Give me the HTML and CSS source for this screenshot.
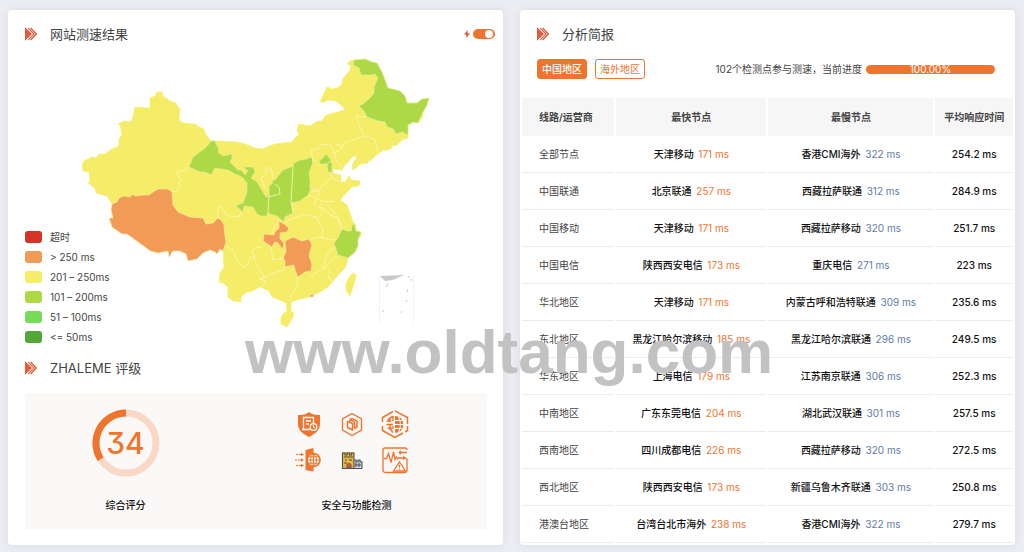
FILE: index.html
```html
<!DOCTYPE html>
<html lang="zh-CN">
<head>
<meta charset="utf-8">
<title>网站测速结果</title>
<link rel="stylesheet" href="styles.css">
</head>
<body>
<svg class="defs" aria-hidden="true">
  <symbol id="chevrons" viewBox="0 0 12 14"><path d="M0 0.200 L7.200 7 L0 13.800Z" fill="#dd5d3c"/><path d="M3.200 1.200 L8.800 7 L3.200 12.800 M5.600 1 L11.300 7 L5.600 13" fill="none" stroke="#dd5d3c" stroke-width="1.300"/><path d="M2.200 1.200 L7.800 7 L2.200 12.800" fill="none" stroke="#fff" stroke-width=".7"/></symbol>
</svg>
<main class="page">
  <section class="card result">
    <header class="title-row">
      <h2 class="title"><svg class="chevrons"><use href="#chevrons"/></svg>网站测速结果</h2>
      <label class="switch">
        <svg class="bolt" viewBox="0 0 6 8"><path d="M3.6 0 L0 4.6 H2.3 L1.9 8 L6 3.3 H3.5Z" fill="#e0552f"/></svg>
        <input class="switch-input" type="checkbox" checked aria-label="快速模式">
      </label>
    </header>
    <div class="map-area">
      <svg class="map" viewBox="75 55 360 292" role="img" aria-label="中国地图">
        <g fill="#f5ed68" stroke="#f5ed68" stroke-width=".6" stroke-linejoin="round">
          <path d="M157 92 162 92 163 96 170 101 176 103 177 106 180 109 179 120 183 123 195 124 199 127 204 129 206 135 211 141 217 141 237 142 245 144 255 148 262 149 275 144 292 142 295 138 299 135 297 130 299 124 310 126 318 121 322 121 325 116 330 114 345 110 343 107 336 101 327 100 325 102 320 102 327 87 332 89 337 88 342 84 342 80 350 70 351 66 347 64 350 61 354 60 365 59 372 62 377 63 379 68 382 72 384 80 388 88 400 91 405 96 407 103 417 103 422 99 429 98 427 105 423 112 422 118 418 123 413 122 408 125 408 138 402 140 397 145 392 146 391 149 387 150 383 150 378 154 367 163 360 164 356 168 352 170 353 163 357 157 353 156 348 162 345 165 342 170 333 169 333 173 341 175 341 182 345 182 349 176 351 180 360 181 359 186 352 187 345 194 340 200 347 205 350 213 353 222 356 225 356 231 361 232 361 235 358 240 355 252 348 258 347 263 345 268 340 273 328 287 320 292 312 296 297 300 291 302 291 311 287 311 286 303 280 300 272 297 269 291 260 287 250 292 247 292 241 297 241 302 233 301 228 297 228 287 223 283 219 282 220 273 224 267 223 251 190 225 112 204 107 196 96 193 95 188 88 183 90 181 89 172 83 171 82 165 84 161 92 157 96 158 99 154 105 154 110 150 119 146 119 139 122 135 120 125 118 124 124 121 131 122 133 117 135 107 150 108 150 98 155 96Z"/>
          <path d="M285 312 290 311 294 313 292 319 287 327 281 324 281 317Z"/>
          <path d="M353 273 356 275 355 281 350 296 346 290 346 284 349 277Z"/>
        </g>
        <g stroke="#fbe9a0" stroke-width=".7" stroke-linejoin="round" fill="#f29b56">
          <path d="M112 204 117 202 119 198 124 196 130 197 133 194 135 196 143 195 149 195 153 192 158 189 168 189 172 192 173 205 178 212 190 217 203 218 206 224 213 223 218 218 222 221 224 225 225 236 226 242 223 251 220 249 217 254 215 252 210 250 203 253 197 259 188 261 186 254 180 251 173 251 169 257 168 251 158 253 150 251 145 247 138 242 127 234 122 234 112 227 109 218 113 218 111 210Z"/>
          <path d="M279 221 284 224 289 228 287 232 280 233 280 239 284 243 283 250 278 243 275 242 272 247 263 241 264 234 274 235 275 232 279 228Z"/>
          <path d="M285 241 293 237 302 241 309 239 312 245 309 255 312 265 311 271 305 272 298 277 295 270 294 265 285 267 285 261 283 258 286 252Z"/>
          <path d="M310 295 314 294 313 297 310 297Z"/>
        </g>
        <g stroke="#e0ed9e" stroke-width=".7" stroke-linejoin="round" fill="#add947">
          <path d="M354 60 365 59 372 62 377 63 382 72 388 88 400 91 405 96 407 103 417 103 422 99 429 98 427 105 423 112 418 123 413 122 408 125 408 135 402 132 396 134 393 129 387 127 385 122 378 121 367 117 364 111 359 106 363 104 370 98 374 93 374 87 378 78 375 74 372 75 361 75 359 68 353 65Z"/>
          <path d="M211 141 215 141 217 146 219 150 218 152 223 156 232 154 232 158 230 162 234 166 238 170 241 170 245 175 248 171 243 167 253 167 255 172 251 178 257 182 262 190 266 197 269 195 269 186 273 183 272 181 275 180 283 170 293 166 294 163 300 160 306 159 312 157 313 162 309 173 311 188 308 195 300 201 291 203 293 213 285 217 284 222 277 216 267 213 267 216 261 216 257 214 253 207 244 206 243 212 237 207 237 205 243 203 247 192 247 183 242 177 235 174 228 170 221 169 215 168 211 175 205 172 200 172 189 167 193 157 201 151 204 149 208 145Z"/>
          <path d="M319 161 323 158 326 154 331 160 330 163 326 164 320 164Z"/>
          <path d="M329 161 332 163 332 172 328 172 327 166Z"/>
          <path d="M342 229 347 231 351 231 352 226 354 223 356 231 361 232 358 240 358 246 355 252 348 258 338 255 334 243 338 238Z"/>
        </g>
        <g fill="none" stroke="#fcf6b8" stroke-width=".8" stroke-linejoin="round">
          <path d="M189 167 185 170 176 172 181 180 178 183 181 187 175 192 172 191M218 218 218 207 221 206 225 213 229 216 238 217 242 213M226 245 230 249 233 250 238 262 243 267 248 264 250 258 255 257 252 251 255 248 263 247M253 257 257 264 264 277 260 279 266 281 262 287M258 280 271 274 283 270 285 267M298 277 297 287 291 296 290 301M284 222 295 218 303 214 318 218M314 214 317 219 323 228 322 237 311 239M293 212 292 203M308 195 320 200 325 202 335 201M317 190 310 188 310 183M313 162 311 150 318 149 322 144 331 145 334 153 342 149 344 143 364 136 359 124 356 116 366 117M366 136 375 140 378 154M342 149 340 145 335 144M266 175 266 168 271 168 273 179M266 175 261 178 265 188M268 197 280 194 279 187 275 184M268 213 269 195M291 203 292 185 293 166M320 191 314 204 323 209 320 217M320 204 329 214 337 218 342 229M327 205 336 214 342 226M331 178 323 185 317 192M321 238 335 240M334 248 327 254 323 269 310 276M329 269 329 278 334 285M338 256 330 261 325 269M271 247 273 260 284 258M279 221 275 225 272 234M311 192 320 190M331 173 331 178 342 182M334 153 337 162 343 168"/>
        </g>
        <g>
          <path d="M413.500 275.500V325M379.500 275V325" fill="none" stroke="#f4f4f4"/><path d="M380 276 404 275 393 280 385 281Z" fill="#c9c9c9"/>
          <path d="M386 287 388 283 M408 276 410 278 M411 281 411 279 M407 292 408 289 M406 302 407 300 M401 313 402 311 M383 312 383 310" stroke="#c4c4c4" stroke-width=".9"/>
        </g>
      </svg>
      <ul class="legend">
        <li class="legend-item"><span class="swatch timeout"></span>超时</li>
        <li class="legend-item"><span class="swatch slow"></span>&gt; 250 ms</li>
        <li class="legend-item"><span class="swatch medium"></span>201 – 250ms</li>
        <li class="legend-item"><span class="swatch fair"></span>101 – 200ms</li>
        <li class="legend-item"><span class="swatch good"></span>51 – 100ms</li>
        <li class="legend-item"><span class="swatch fast"></span>&lt;= 50ms</li>
      </ul>
    </div>
    <h2 class="title rating-title"><svg class="chevrons"><use href="#chevrons"/></svg>ZHALEME 评级</h2>
    <div class="rating">
      <div class="rating-part score-part">
        <div class="ring">
          <svg class="ring-art" viewBox="0 0 68 68" aria-hidden="true"><circle cx="34" cy="34" r="30" fill="none" stroke="#fad8c6" stroke-width="7"/><circle cx="34" cy="34" r="30" fill="none" stroke="#ef752e" stroke-width="7" pathLength="100" stroke-dasharray="34 66" transform="rotate(147.6 34 34)"/></svg>
          <span class="score">34</span>
        </div>
        <p class="caption">综合评分</p>
      </div>
      <div class="rating-part">
        <div class="icons">
          <svg class="icon" viewBox="0 0 28 28"><path d="M14 2C10 5 7 5 3 5V14C3 20 8 24 14 27C20 24 25 20 25 14V5C21 5 18 5 14 2Z" fill="#ef752e"/><path d="M18.500 13V7.500H8.500V19.500H15M11 11H16M11 14H14M7 19.500H15" fill="none" stroke="#fff" stroke-width="1.300"/><circle cx="18.500" cy="17" r="3.300" fill="#ef752e" stroke="#fff" stroke-width="1.200"/><path d="M18.500 15V17.500H20" fill="none" stroke="#fff"/></svg>
          <svg class="icon" viewBox="0 0 28 28"><g fill="none" stroke="#ef752e"><path d="M14 3.500 23.500 9V20L14 25.500 4.500 20V9Z" stroke-width="1.400"/><path d="M9.500 11.500 14.500 13.500V20L9.500 17.500ZM12 11.500V9.500L14 8.500 19 11V17L16.500 18.500M12 9.700 16.500 12V18.500" stroke-width="1.500"/></g></svg>
          <svg class="icon" viewBox="0 0 28 28"><g fill="none" stroke="#ef752e" stroke-width="1.500"><path d="M1.500 12V7.500L12 1.500M14 0.800 26.500 7.500V14M1.500 16V20.500L14 27.500 22 23M26.500 16V20.500L24 22"/></g><path d="M14 6A8.500 8.500 0 0 1 14 23Z" fill="#ef752e"/><path d="M14 10.500H21M14 14.500H22.500M14 18.500H21M17.500 7C20 12 20 17 17.500 22" fill="none" stroke="#fff"/><path d="M12 6.500A8.500 8.500 0 0 0 6.500 11H10M5.500 14.500H12M6.500 18H10A5 5 0 0 0 12 22.500M9 8V12M9 14V20M12 6V11M12 16V19" fill="none" stroke="#ef752e" stroke-width="1.400"/></svg>
          <svg class="icon" viewBox="0 0 28 28"><path d="M10.500 4 18.500 2V25.500L10.500 24Z" fill="#ef752e"/><circle cx="18.500" cy="14" r="6.500" fill="#faf9f8" stroke="#ef752e" stroke-width="1.600"/><path d="M12 14H25M13 10.800H24M13 17.200H24M18.500 7.500V20.500M18.500 7.500C14.500 11 14.500 17 18.500 20.500C22.500 17 22.500 11 18.500 7.500" fill="none" stroke="#ef752e"/><path d="M1 8.500H6M0 14H6M1 19.500H6" stroke="#ef752e" stroke-dasharray="2 1 3 1"/><path d="M6 6.700 9 8.500 6 10.300ZM6 12.200 9 14 6 15.800ZM6 17.700 9 19.500 6 21.300Z" fill="#ef752e"/></svg>
          <svg class="icon" viewBox="0 0 28 28"><path d="M4.500 6H16V22H4.500Z" fill="#e9b637"/><path d="M16 14H24V22H16Z" fill="#d9dade"/><path d="M4.500 22V7H7V9H9V7H11.500V9H13.500V7H16V22M4 22.500H24M16 14H18V16H20V14H22V16H24V22M6 11H15M7 14H9M11 14H14M6 17H9M17 19H23M18 17V21M21 17V21" fill="none" stroke="#4b5060" stroke-width="1.100"/><path d="M9 22V19C9 17 13 17 13 19V22Z" fill="#dc543b" stroke="#565866"/></svg>
          <svg class="icon" viewBox="0 0 28 28"><g fill="none" stroke="#ef752e" stroke-width="1.300"><path d="M26 12V24Q26 26.500 23.500 26.500H4.500Q2 26.500 2 24V4Q2 2 4 2H24Q26 2 26 4"/><path d="M3 12.500H5.500L7.500 7.500 10 16.500 12.500 6 14 13.500 15.500 11 17 13.500"/><path d="M18 6.500H26M17 12H25"/><path d="M18.500 16 24.500 25H12.500ZM18.500 18.800V21.500M18.500 22.500V23.700"/></g><path d="M20 4.300V8.700L17 6.500ZM22 9.800V14.200L25 12Z" fill="#ef752e"/></svg>
        </div>
        <p class="caption">安全与功能检测</p>
      </div>
    </div>
  </section>

  <section class="card report">
    <h2 class="title report-title"><svg class="chevrons"><use href="#chevrons"/></svg>分析简报</h2>
    <div class="toolbar">
      <div class="tabs">
        <button class="tab active" type="button">中国地区</button>
        <button class="tab" type="button">海外地区</button>
      </div>
      <div class="status"><span>102个检测点参与测速，当前进度</span><div class="progress" role="progressbar" aria-label="当前进度" aria-valuenow="100">100.00%</div></div>
    </div>
    <table class="nodes">
      <colgroup><col class="col-line"><col class="col-fast"><col class="col-slow"><col class="col-time"></colgroup>
      <thead><tr><th class="line">线路/运营商</th><th>最快节点</th><th>最慢节点</th><th>平均响应时间</th></tr></thead>
      <tbody>
        <tr><td class="line">全部节点</td><td>天津移动 <span class="fastest">171 ms</span></td><td>香港CMI海外 <span class="slowest">322 ms</span></td><td>254.2 ms</td></tr>
        <tr><td class="line">中国联通</td><td>北京联通 <span class="fastest">257 ms</span></td><td>西藏拉萨联通 <span class="slowest">312 ms</span></td><td>284.9 ms</td></tr>
        <tr><td class="line">中国移动</td><td>天津移动 <span class="fastest">171 ms</span></td><td>西藏拉萨移动 <span class="slowest">320 ms</span></td><td>251.7 ms</td></tr>
        <tr><td class="line">中国电信</td><td>陕西西安电信 <span class="fastest">173 ms</span></td><td>重庆电信 <span class="slowest">271 ms</span></td><td>223 ms</td></tr>
        <tr><td class="line">华北地区</td><td>天津移动 <span class="fastest">171 ms</span></td><td>内蒙古呼和浩特联通 <span class="slowest">309 ms</span></td><td>235.6 ms</td></tr>
        <tr><td class="line">东北地区</td><td>黑龙江哈尔滨移动 <span class="fastest">185 ms</span></td><td>黑龙江哈尔滨联通 <span class="slowest">296 ms</span></td><td>249.5 ms</td></tr>
        <tr><td class="line">华东地区</td><td>上海电信 <span class="fastest">179 ms</span></td><td>江苏南京联通 <span class="slowest">306 ms</span></td><td>252.3 ms</td></tr>
        <tr><td class="line">中南地区</td><td>广东东莞电信 <span class="fastest">204 ms</span></td><td>湖北武汉联通 <span class="slowest">301 ms</span></td><td>257.5 ms</td></tr>
        <tr><td class="line">西南地区</td><td>四川成都电信 <span class="fastest">226 ms</span></td><td>西藏拉萨移动 <span class="slowest">320 ms</span></td><td>272.5 ms</td></tr>
        <tr><td class="line">西北地区</td><td>陕西西安电信 <span class="fastest">173 ms</span></td><td>新疆乌鲁木齐联通 <span class="slowest">303 ms</span></td><td>250.8 ms</td></tr>
        <tr><td class="line">港澳台地区</td><td>台湾台北市海外 <span class="fastest">238 ms</span></td><td>香港CMI海外 <span class="slowest">322 ms</span></td><td>279.7 ms</td></tr>
      </tbody>
    </table>
  </section>
  <div class="watermark">www.oldtang.com</div>
</main>
</body>
</html>
```
FILE: styles.css
```css
* { box-sizing: border-box; }
body {
  margin: 0;
  background: #ebedf2;
  color: #444;
  font: 10px/20px Inter, "Noto Sans CJK SC", sans-serif;
}
.defs { position: absolute; width: 0; height: 0; }
.page {
  position: relative;
  display: grid;
  grid-template-columns: 1fr 1fr;
  gap: 17px;
  padding: 10px 9px 8px 8px;
}
.card {
  min-width: 0;
  background: #fff;
  border-radius: 4px;
  box-shadow: 0 0 8px rgba(90, 100, 120, .12);
}
.result { display: flex; flex-direction: column; padding: 14px 16px 16px 17px; }
.title-row { display: flex; justify-content: space-between; align-items: center; margin-right: -8px; }
.title {
  display: flex;
  align-items: center;
  gap: 13px;
  margin: 0;
  font-size: 13px;
  line-height: 20px;
  font-weight: 400;
  color: #444;
}
.chevrons { width: 12px; height: 14px; }
.switch { display: flex; align-items: center; gap: 3px; }
.bolt { width: 6px; height: 8px; }
.switch-input {
  appearance: none;
  display: flex;
  justify-content: flex-end;
  width: 22px;
  height: 10px;
  margin: 0;
  padding: 1px 2px;
  border-radius: 5px;
  background: #ef752e;
}
.switch-input::before { content: ""; width: 8px; height: 8px; border-radius: 50%; background: #fff; }
.map-area { display: grid; margin-top: 11px; }
.map { grid-area: 1 / 1; width: 360px; height: 292px; margin-left: 50px; }
.legend { grid-area: 1 / 1; align-self: end; margin: 0; padding: 0; list-style: none; }
.legend-item { display: flex; align-items: center; gap: 8px; height: 20px; }
.swatch { width: 17px; height: 12px; border-radius: 3px; }
.timeout { background: #d53327; }
.slow { background: #f29b56; }
.medium { background: #f5ed68; }
.fair { background: #add947; }
.good { background: #77db58; }
.fast { background: #54a637; }
.rating-title { margin-top: 11px; }
.rating {
  flex: 1;
  display: grid;
  grid-template-columns: 201px 1fr;
  margin-top: 15px;
  padding: 16px 0 14px;
  background: #faf9f8;
}
.rating-part { display: flex; flex-direction: column; align-items: center; justify-content: space-between; }
.ring { display: grid; place-items: center; }
.ring-art { grid-area: 1 / 1; width: 68px; height: 68px; }
.score { grid-area: 1 / 1; color: #ef752e; font-size: 30px; line-height: 30px; font-weight: 500; font-feature-settings: "cv09"; }
.caption { margin: 0; color: #111; line-height: 20px; font-weight: 500; }
.icons { display: grid; grid-template-columns: repeat(3, 28px); column-gap: 15px; row-gap: 8px; padding: 1px 9px 0 0; }
.icon { width: 28px; height: 28px; }
.report { padding-bottom: 2px; }
.report-title { padding: 14px 17px 0; }
.toolbar { display: flex; align-items: center; justify-content: space-between; margin: 15px 20px 19px 17px; }
.tabs { display: flex; gap: 8px; }
.tab {
  height: 20px;
  padding: 0 4px;
  border: 1px solid #ef752e;
  border-radius: 3px;
  background: #fff;
  color: #ef752e;
  font: inherit;
  line-height: 18px;
}
.active { background: #ef752e; color: #fff; font-weight: 500; }
.status { display: flex; align-items: center; gap: 4px; }
.progress {
  width: 129px;
  height: 9px;
  border-radius: 5px;
  background: #ef752e;
  color: #fff;
  line-height: 9px;
  text-align: center;
}
.nodes { width: 100%; table-layout: fixed; border-spacing: 2px 0; text-align: center; }
.col-line { width: 19%; }
.col-fast { width: 31%; }
.col-slow { width: 34%; }
.col-time { width: 16%; }
.nodes th { height: 38px; padding: 0; background: #f6f6f6; font-weight: 600; }
.nodes td { height: 37px; padding: 0; border-bottom: 1px solid #ececec; color: #111; font-weight: 500; white-space: nowrap; }
.nodes .line { padding-left: 17px; text-align: left; }
.nodes td.line { color: #444; font-weight: 400; }
.fastest, .slowest { margin-left: 2px; font-weight: 400; }
.fastest { color: #ef752e; }
.slowest { color: #607ba5; }
.watermark {
  position: absolute;
  top: 316px;
  left: 245px;
  color: #c2c2c2;
  font: bold 62px/72px "Liberation Sans", sans-serif;
  pointer-events: none;
}
```
